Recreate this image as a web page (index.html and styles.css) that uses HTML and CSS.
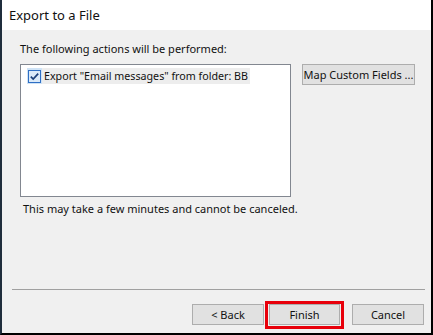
FILE: index.html
```html
<!DOCTYPE html>
<html>
<head>
<meta charset="utf-8">
<link rel="stylesheet" href="styles.css">
</head>
<body>
<div class="dialog">
  <div class="titlebar">Export to a File</div>
  <div class="content">
    <div class="label">The following actions will be performed:</div>
    <div class="main-row">
      <div class="listbox">
        <div class="item">
          <span class="check">
            <svg width="13" height="13" viewBox="0 0 13 13"><rect x="0.5" y="0.5" width="12" height="12" fill="#dbeaf9" stroke="#2f6fc4"/><path d="M2.8 6.6 L5.2 9 L10.2 3.6" fill="none" stroke="#1b3f7a" stroke-width="1.7"/></svg>
          </span>
          <span class="item-text">Export "Email messages" from folder: BB</span>
        </div>
      </div>
      <button class="btn map">Map Custom Fields ...</button>
    </div>
    <div class="note">This may take a few minutes and cannot be canceled.</div>
  </div>
  <div class="separator"></div>
  <div class="buttons">
    <button class="btn nav back">&lt; Back</button>
    <span class="highlight"><button class="btn nav">Finish</button></span>
    <button class="btn nav cancel">Cancel</button>
  </div>
</div>
</body>
</html>
```
FILE: styles.css
```css
html, body {
  margin: 0;
  padding: 0;
}
body {
  width: 433px;
  height: 335px;
  overflow: hidden;
  font-family: "Noto Sans", "Open Sans", sans-serif;
  font-size: 11px;
  color: #111;
}
.dialog {
  box-sizing: border-box;
  width: 433px;
  height: 335px;
  background: #f0f0f0;
  border-left: 2px solid #1f2d3c;
  border-right: 2px solid #000;
  border-bottom: 2px solid #000;
  display: flex;
  flex-direction: column;
}
.titlebar {
  height: 30px;
  background: #fff;
  padding-left: 7px;
  line-height: 30px;
  font-size: 13px;
  color: #111;
}
.content {
  padding: 11px 0 0 18px;
  height: 259px;
  box-sizing: border-box;
}
.label {
  line-height: 16px;
  height: 23px;
}
.main-row {
  display: flex;
  align-items: flex-start;
}
.listbox {
  width: 263px;
  height: 128px;
  background: #fff;
  border: 1px solid #828790;
  padding: 3px 0 0 6px;
}
.item {
  display: inline-flex;
  align-items: center;
  background: #ededed;
  height: 16px;
  padding: 0 2px 0 0;
}
.check {
  width: 15px;
  height: 16px;
  display: inline-flex;
  align-items: center;
  justify-content: center;
  background: #cfe3f6;
  margin-right: 2px;
}
.check svg { display: block; }
.item-text {
  white-space: nowrap;
  font-size: 10.7px;
}
.btn {
  font-family: inherit;
  font-size: 11px;
  color: #111;
  background: #e1e1e1;
  border: 1px solid #adadad;
  padding: 0;
  margin: 0;
  height: 21px;
  box-sizing: border-box;
  white-space: nowrap;
}
.map {
  margin-left: 11px;
  width: 113px;
}
.note {
  margin: 4px 0 0 3px;
  line-height: 16px;
}
.separator {
  margin: 0 6px 0 10px;
  height: 1px;
  background: #a0a0a0;
}
.buttons {
  display: flex;
  justify-content: flex-end;
  align-items: flex-start;
  padding: 11px 7px 0 0;
}
.nav {
  width: 72px;
  height: 21px;
}
.back {
  margin-top: 3px;
  margin-right: 1px;
}
.cancel {
  margin-top: 3px;
  margin-left: 8px;
}
.highlight {
  border: 3px solid #e8000b;
  padding: 0 1px 1px 1px;
  display: inline-flex;
}
.highlight .nav { width: 71px; }
```
